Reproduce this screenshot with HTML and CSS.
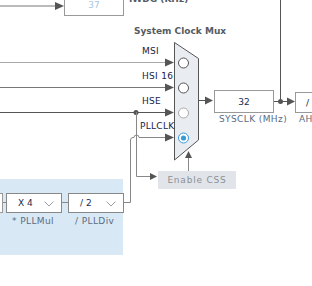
FILE: index.html
```html
<!DOCTYPE html>
<html lang="en">
<head>
    <meta charset="UTF-8">
    <meta name="viewport" content="width=device-width, initial-scale=1.0">
    <title>Clock Configuration</title>
    <link rel="stylesheet" href="styles.css">
</head>
<body>
    <div class="diagram">
        <div class="pll-panel"></div>

        <svg class="wires" width="312" height="286" viewBox="0 0 312 286">
            <!-- IWDG input -->
            <line x1="0" y1="6" x2="57" y2="6" stroke="#777" />
            <polygon points="55,2 64,6 55,10" fill="#555" />

            <!-- SYSCLK tap going up -->
            <line x1="280.5" y1="0" x2="280.5" y2="101" stroke="#555" />

            <!-- mux inputs -->
            <line x1="0" y1="62.5" x2="167" y2="62.5" stroke="#aaa" />
            <polygon points="165,58.5 174,62.5 165,66.5" fill="#555" />
            <line x1="0" y1="87.5" x2="167" y2="87.5" stroke="#777" />
            <polygon points="165,83.5 174,87.5 165,91.5" fill="#555" />
            <line x1="0" y1="112.5" x2="167" y2="112.5" stroke="#555" />
            <polygon points="165,108.5 174,112.5 165,116.5" fill="#555" />
            <circle cx="136" cy="112.5" r="2.5" fill="#555" />

            <!-- HSE to clock security -->
            <polyline points="136.5,112 136.5,176.5 151,176.5" fill="none" stroke="#888" />
            <polygon points="150,173 157,176.5 150,180" fill="#555" />

            <!-- PLL output -->
            <path d="M123 202.5 H130.5 V140 Q130.5 137.5 133 137.5 H134 A2.5 2.5 0 0 1 139 137.5 H167" fill="none" stroke="#888" />
            <polygon points="165,133.5 174,137.5 165,141.5" fill="#555" />

            <!-- mux body -->
            <polygon points="174.5,42.5 198.5,58.5 198.5,140 174.5,160" fill="#e9edf1" stroke="#555" />
            <circle cx="183.5" cy="63" r="5" fill="#fff" stroke="#555" />
            <circle cx="183.5" cy="88" r="5" fill="#fff" stroke="#555" />
            <circle cx="183.5" cy="113" r="5" fill="#fff" stroke="#aaa" />
            <circle cx="183.5" cy="138" r="5" fill="#fff" stroke="#3b9ad8" />
            <circle cx="183.5" cy="138" r="2.6" fill="#3b9ad8" />

            <!-- enable css into mux -->
            <line x1="188.5" y1="171" x2="188.5" y2="157" stroke="#888" />
            <polygon points="185,158 188.5,151 192,158" fill="#555" />

            <!-- mux output -->
            <line x1="198" y1="100.5" x2="206" y2="100.5" stroke="#555" />
            <polygon points="205,96.5 213,100.5 205,104.5" fill="#555" />

            <!-- sysclk to AHB -->
            <line x1="273" y1="101.5" x2="288" y2="101.5" stroke="#555" />
            <circle cx="280.5" cy="101.5" r="2.5" fill="#555" />
            <polygon points="287,97.5 295,101.5 287,105.5" fill="#555" />

            <!-- PLL chain -->
            <line x1="2" y1="202.5" x2="6" y2="202.5" stroke="#888" />
            <line x1="61" y1="202.5" x2="68" y2="202.5" stroke="#888" />
        </svg>

        <div class="node box-iwdg">37</div>
        <div class="title iwdg-title">IWDG (KHz)</div>

        <div class="title mux-title">System Clock Mux</div>
        <div class="src src-msi">MSI</div>
        <div class="src src-hsi">HSI 16</div>
        <div class="src src-hse">HSE</div>
        <div class="src src-pll">PLLCLK</div>

        <div class="node box-sysclk">32</div>
        <div class="caption cap-sysclk">SYSCLK (MHz)</div>
        <div class="node box-ahb">/</div>
        <div class="caption cap-ahb">AH</div>

        <div class="css-btn">Enable CSS</div>

        <div class="node box-prev"></div>
        <div class="node select sel-mul">X 4
            <svg class="chev" width="10" height="6" viewBox="0 0 10 6"><polyline points="0.5,0.5 5,5 9.5,0.5" fill="none" stroke="#9aa0a8" /></svg>
        </div>
        <div class="caption cap-mul">* PLLMul</div>
        <div class="node select sel-div">/ 2
            <svg class="chev" width="10" height="6" viewBox="0 0 10 6"><polyline points="0.5,0.5 5,5 9.5,0.5" fill="none" stroke="#9aa0a8" /></svg>
        </div>
        <div class="caption cap-div">/ PLLDiv</div>
    </div>
</body>
</html>
```

FILE: styles.css
```css
body {
    margin: 0;
    padding: 0;
    background: #fff;
    font-family: 'DejaVu Sans', 'Liberation Sans', sans-serif;
}

.diagram {
    position: relative;
    width: 312px;
    height: 286px;
    overflow: hidden;
}

.wires {
    position: absolute;
    left: 0;
    top: 0;
}

.pll-panel {
    position: absolute;
    left: 0;
    top: 179px;
    width: 123px;
    height: 76px;
    background: #d9e8f5;
}

.node {
    position: absolute;
    box-sizing: border-box;
    background: #fff;
    border: 1px solid #999;
    font-size: 9px;
    color: #1c2b4a;
    display: flex;
    align-items: center;
    justify-content: center;
}

.box-iwdg {
    left: 64px;
    top: -6px;
    width: 60px;
    height: 22px;
    color: #a9c6e6;
}

.box-sysclk {
    left: 214px;
    top: 90px;
    width: 60px;
    height: 23px;
}

.box-ahb {
    left: 295px;
    top: 92px;
    width: 40px;
    height: 21px;
    justify-content: flex-start;
    padding-left: 10px;
}

.box-prev {
    left: -40px;
    top: 193px;
    width: 43px;
    height: 20px;
}

.select {
    top: 193px;
    width: 56px;
    height: 20px;
    justify-content: flex-start;
    padding-left: 11px;
    border-color: #888;
}

.sel-mul {
    left: 6px;
}

.sel-div {
    left: 68px;
}

.chev {
    position: absolute;
    right: 7px;
    top: 7px;
}

.title {
    position: absolute;
    font-size: 9px;
    font-weight: bold;
    color: #555b63;
    white-space: nowrap;
}

.iwdg-title {
    left: 129px;
    top: -6px;
}

.mux-title {
    left: 134px;
    top: 26px;
}

.src {
    position: absolute;
    left: 142px;
    font-size: 9px;
    color: #14244a;
    letter-spacing: 0.3px;
    white-space: nowrap;
}

.src-msi { top: 46px; }
.src-hsi { top: 71px; }
.src-hse { top: 96px; }
.src-pll { top: 121px; left: 140px; }

.caption {
    position: absolute;
    font-size: 9px;
    color: #5b6b80;
    letter-spacing: 0.4px;
    white-space: nowrap;
}

.cap-sysclk {
    left: 219px;
    top: 114px;
}

.cap-ahb {
    left: 299px;
    top: 114px;
}

.cap-mul {
    left: 12px;
    top: 216px;
}

.cap-div {
    left: 75px;
    top: 216px;
}

.css-btn {
    position: absolute;
    left: 158px;
    top: 171px;
    width: 78px;
    height: 18px;
    background: #e1e5e9;
    color: #8a8f96;
    font-size: 9px;
    letter-spacing: 0.8px;
    display: flex;
    align-items: center;
    justify-content: center;
}
```
